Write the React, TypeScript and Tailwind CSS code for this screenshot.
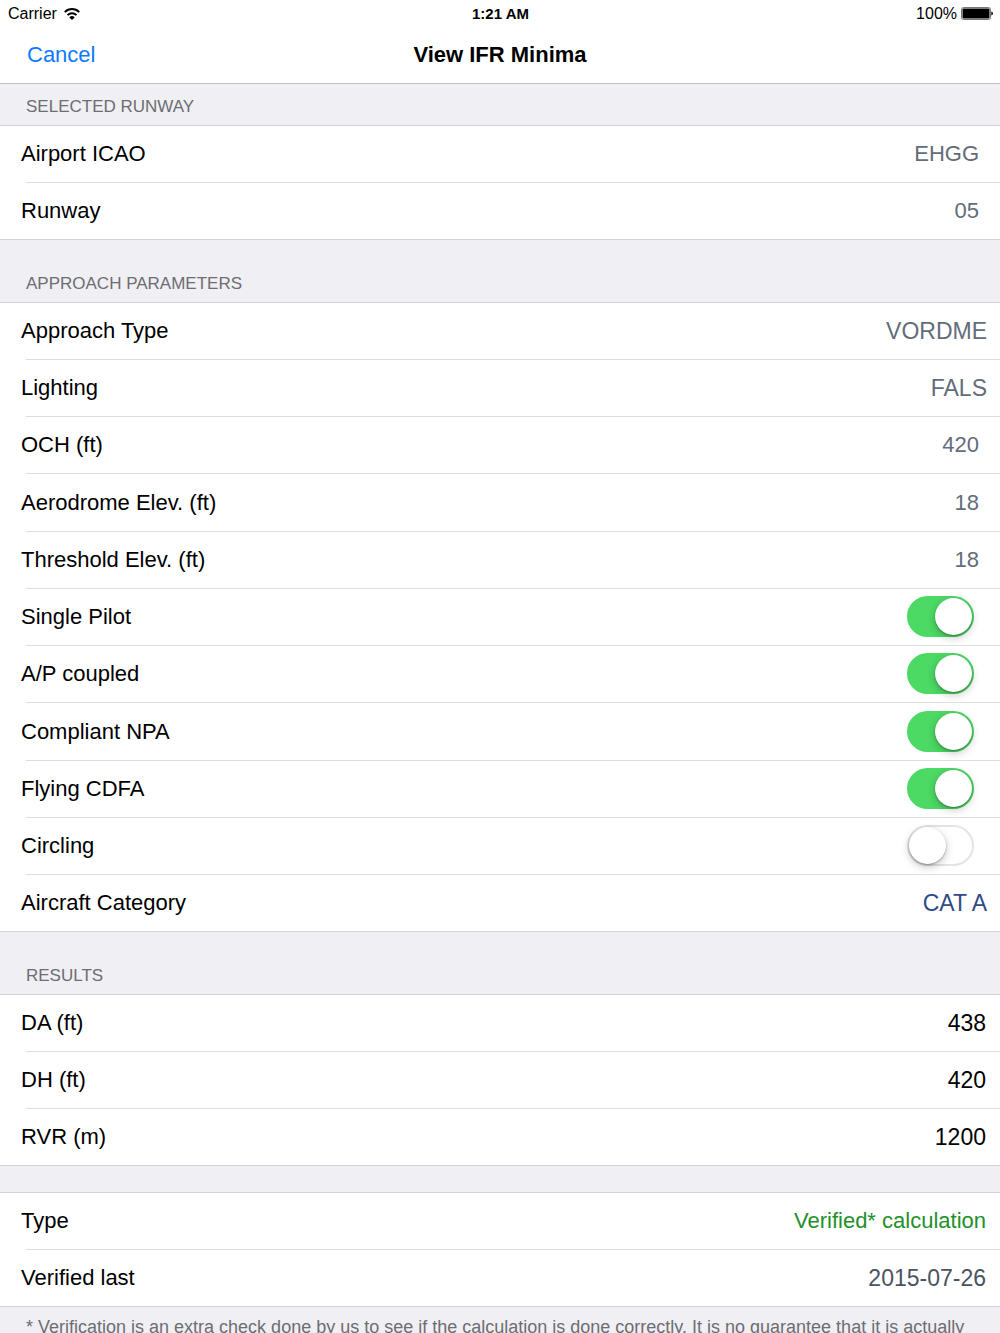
import { useId, useState, type ReactNode } from "react";

function WifiIcon() {
  return (
    <svg className="mb-px h-3 w-4" viewBox="0 0 16 12" fill="none" aria-hidden="true">
      <path d="M0.8 4.1A10.2 10.2 0 0 1 15.2 4.1" stroke="black" strokeWidth="2" />
      <path d="M3.5 7.1A6.3 6.3 0 0 1 12.5 7.1" stroke="black" strokeWidth="2" />
      <path d="M8 12L5.3 9.4A3.8 3.8 0 0 1 10.7 9.4Z" fill="black" />
    </svg>
  );
}

function BatteryIcon() {
  return (
    <svg className="mb-px h-[13px] w-8" viewBox="0 0 32 13" aria-hidden="true">
      <rect x="0.5" y="0.5" width="29" height="12" rx="2" fill="white" stroke="#777" />
      <rect x="1.5" y="1.5" width="27" height="10" rx="1" fill="black" />
      <path d="M30.3 4.4Q32 4.8 32 6.5T30.3 8.6Z" fill="black" />
    </svg>
  );
}

function StatusBar() {
  return (
    <div className="grid h-7 grid-cols-3 items-center pr-[7px] pl-2 text-base leading-5">
      <div className="flex items-center gap-[7px]">
        <span>Carrier</span>
        <WifiIcon />
      </div>
      <div className="text-center text-[15px] font-bold">1:21 AM</div>
      <div className="flex items-center justify-end gap-1">
        <span>100%</span>
        <BatteryIcon />
      </div>
    </div>
  );
}

function NavBar() {
  return (
    <header className="grid h-14 grid-cols-3 items-center border-b border-[#c0c0c4] px-[27px] pb-px text-[22px] leading-7">
      <button type="button" className="justify-self-start text-[#0b7bff]">
        Cancel
      </button>
      <h1 className="justify-self-center font-bold whitespace-nowrap">View IFR Minima</h1>
    </header>
  );
}

function SectionTitle({ children }: { children: ReactNode }) {
  return (
    <h2 className="pb-1.5 pl-[26px] text-[17px] leading-6 text-[#6d6d72] uppercase">{children}</h2>
  );
}

function Group({ children }: { children: ReactNode }) {
  return <div className="border-y border-[#d2d2d6] bg-white">{children}</div>;
}

const rowClass =
  "relative flex h-[57px] items-center justify-between pb-px pl-[21px] text-[22px] leading-7 nth-[4n]:h-[58px] last:h-14 " +
  "after:absolute after:right-0 after:bottom-0 after:left-[26px] after:h-px after:bg-[#dededf] last:after:hidden";

function FieldRow({ label, value }: { label: string; value: string }) {
  const id = useId();
  return (
    <div className={rowClass}>
      <label htmlFor={id}>{label}</label>
      <input
        id={id}
        type="text"
        defaultValue={value}
        className="w-1/2 bg-transparent pr-[21px] text-right text-[#636c7a] outline-none"
      />
    </div>
  );
}

function PickerRow({ label, value, color }: { label: string; value: string; color: string }) {
  const id = useId();
  return (
    <div className={rowClass}>
      <label htmlFor={id}>{label}</label>
      <select
        id={id}
        defaultValue={value}
        className={`mr-[13px] appearance-none bg-transparent text-right text-[23px] outline-none ${color}`}
      >
        <option>{value}</option>
      </select>
    </div>
  );
}

function SwitchRow({ label, initial }: { label: string; initial: boolean }) {
  const id = useId();
  const [on, setOn] = useState(initial);
  return (
    <div className={rowClass}>
      <label htmlFor={id}>{label}</label>
      <input
        id={id}
        type="checkbox"
        role="switch"
        checked={on}
        onChange={(e) => setOn(e.target.checked)}
        className="mr-[26px] mb-px flex h-[41px] w-[67px] appearance-none items-center rounded-full border-2 border-[#e4e4e4] bg-white before:size-[37px] before:rounded-full before:bg-white before:shadow-[0_3px_8px_rgba(0,0,0,0.22),0_1px_2px_rgba(0,0,0,0.3)] checked:justify-end checked:border-[#4cd964] checked:bg-[#4cd964]"
      />
    </div>
  );
}

function ValueRow({ label, value, color }: { label: string; value: string; color: string }) {
  return (
    <div className={rowClass}>
      <span>{label}</span>
      <span className={`pr-[14px] ${color}`}>{value}</span>
    </div>
  );
}

export default function App() {
  return (
    <div className="flex h-screen flex-col bg-white font-['Liberation_Sans',Arial,sans-serif] text-black">
      <StatusBar />
      <NavBar />
      <main className="flex-1 overflow-y-auto bg-[#efeff4] [scrollbar-width:none]">
        <section className="pt-[11px]">
          <SectionTitle>Selected Runway</SectionTitle>
          <Group>
            <FieldRow label="Airport ICAO" value="EHGG" />
            <FieldRow label="Runway" value="05" />
          </Group>
        </section>

        <section className="pt-8">
          <SectionTitle>Approach Parameters</SectionTitle>
          <Group>
            <PickerRow label="Approach Type" value="VORDME" color="text-[#636c7a]" />
            <PickerRow label="Lighting" value="FALS" color="text-[#636c7a]" />
            <FieldRow label="OCH (ft)" value="420" />
            <FieldRow label="Aerodrome Elev. (ft)" value="18" />
            <FieldRow label="Threshold Elev. (ft)" value="18" />
            <SwitchRow label="Single Pilot" initial={true} />
            <SwitchRow label="A/P coupled" initial={true} />
            <SwitchRow label="Compliant NPA" initial={true} />
            <SwitchRow label="Flying CDFA" initial={true} />
            <SwitchRow label="Circling" initial={false} />
            <PickerRow label="Aircraft Category" value="CAT A" color="text-[#2f4b87]" />
          </Group>
        </section>

        <section className="pt-8">
          <SectionTitle>Results</SectionTitle>
          <Group>
            <ValueRow label="DA (ft)" value="438" color="text-[23px] text-black" />
            <ValueRow label="DH (ft)" value="420" color="text-[23px] text-black" />
            <ValueRow label="RVR (m)" value="1200" color="text-[23px] text-black" />
          </Group>
        </section>

        <section className="pt-[26px]">
          <Group>
            <ValueRow label="Type" value="Verified* calculation" color="text-[#22902a]" />
            <ValueRow label="Verified last" value="2015-07-26" color="text-[23px] text-[#4a5361]" />
          </Group>
          <p className="px-[26px] pt-2 text-lg leading-6 text-[#6d6d72]">
            * Verification is an extra check done by us to see if the calculation is done correctly. It is no guarantee that it is actually
          </p>
        </section>
      </main>
    </div>
  );
}
